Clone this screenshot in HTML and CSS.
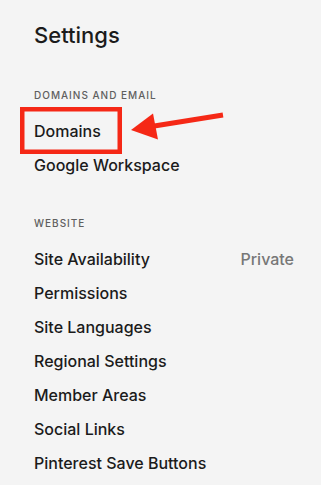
FILE: index.html
```html
<!DOCTYPE html>
<html>
<head>
  <title>Settings</title>
  <link rel="stylesheet" href="styles.css">
</head>
<body>
  <div class="panel">
    <h1>Settings</h1>

    <div class="section">
      <div class="section-label">Domains and Email</div>
      <ul class="menu">
        <li>Domains</li>
        <li>Google Workspace</li>
      </ul>
    </div>

    <div class="section">
      <div class="section-label">Website</div>
      <ul class="menu">
        <li><span>Site Availability</span><span class="value">Private</span></li>
        <li>Permissions</li>
        <li>Site Languages</li>
        <li>Regional Settings</li>
        <li>Member Areas</li>
        <li>Social Links</li>
        <li>Pinterest Save Buttons</li>
      </ul>
    </div>

    <!-- annotation drawn over the page -->
    <svg class="callout" width="321" height="485" viewBox="0 0 321 485">
      <rect x="22.25" y="109.25" width="97.5" height="42.5" fill="none" stroke="#f52816" stroke-width="4.5"/>
      <line x1="148" y1="127" x2="223" y2="115" stroke="#f52816" stroke-width="5"/>
      <polygon points="131,130 153,113.5 158,139.5" fill="#f52816"/>
    </svg>
  </div>
</body>
</html>
```

FILE: styles.css
```css
html, body {
  margin: 0;
  background-color: #f4f4f4;
}
body {
  font-family: Inter, "Noto Sans", sans-serif;
  color: #1b1b1b;
}
.panel {
  position: relative;
  padding: 21px 27px 0 34px;
  height: 485px;
  box-sizing: border-box;
  overflow: hidden;
}
h1 {
  margin: 0;
  font-size: 22px;
  line-height: 28px;
  font-weight: 500;
}
.section {
  margin-top: 38px;
}
.section + .section {
  margin-top: 33px;
}
.section-label {
  font-size: 10px;
  line-height: 16px;
  font-weight: 500;
  letter-spacing: 1px;
  text-transform: uppercase;
  color: #5f5f5f;
  margin-bottom: 11px;
}
.menu {
  list-style: none;
  margin: 0;
  padding: 0;
}
.menu li {
  display: flex;
  justify-content: space-between;
  font-size: 16px;
  line-height: 34px;
  font-weight: 500;
}
.value {
  color: #777;
}
.callout {
  position: absolute;
  top: 0;
  left: 0;
}
```
